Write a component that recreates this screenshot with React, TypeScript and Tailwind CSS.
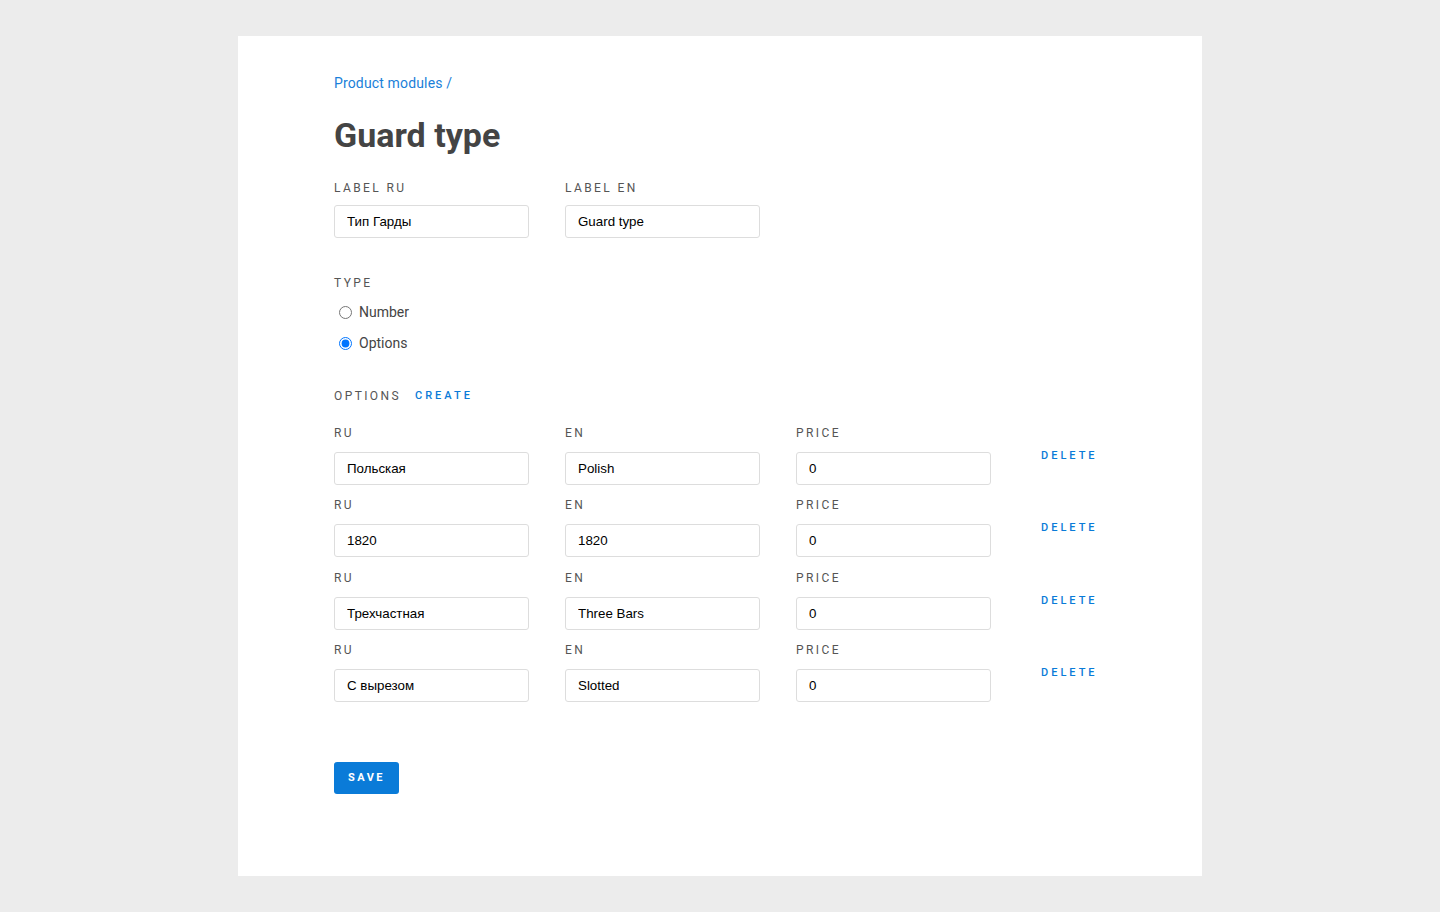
import React, { useState } from 'react';

type Option = { ru: string; en: string; price: string };

const initialOptions: Option[] = [
  { ru: 'Польская', en: 'Polish', price: '0' },
  { ru: '1820', en: '1820', price: '0' },
  { ru: 'Трехчастная', en: 'Three Bars', price: '0' },
  { ru: 'С вырезом', en: 'Slotted', price: '0' },
];

const labelCls = 'block text-[12px] leading-[14px] tracking-[2.4px] uppercase text-[#555]';
const inputCls =
  'w-[195px] h-[33px] border border-[#ddd] rounded-[3px] px-[12px] text-[13.33px] text-black outline-none bg-white font-["Liberation_Sans",Arial,sans-serif]';
const linkCls = 'text-[11px] leading-[14px] tracking-[3px] uppercase font-medium text-[#0a7bd8]';

export default function App() {
  const [labelRu, setLabelRu] = useState('Тип Гарды');
  const [labelEn, setLabelEn] = useState('Guard type');
  const [type, setType] = useState<'number' | 'options'>('options');
  const [options, setOptions] = useState<Option[]>(initialOptions);

  const update = (i: number, key: keyof Option, value: string) => {
    setOptions(prev => prev.map((o, idx) => (idx === i ? { ...o, [key]: value } : o)));
  };

  return (
    <div className="min-h-screen bg-[#ececec] pt-[36px] pb-[36px] font-[Roboto,'Noto_Sans',sans-serif]">
      <div className="w-[964px] h-[840px] mx-auto bg-white pl-[96px] pt-[37px]">
        <div className="text-[14px] leading-[20px] tracking-[0.15px] text-[#1a7fd9]">Product modules /</div>

        <h1 className="mt-[22px] text-[34px] leading-[40px] font-bold text-[#444]">Guard type</h1>

        <div className="mt-[26px] flex gap-[36px]">
          <div>
            <label className={labelCls}>Label ru</label>
            <input className={`${inputCls} mt-[10px]`} value={labelRu} onChange={e => setLabelRu(e.target.value)} />
          </div>
          <div>
            <label className={labelCls}>Label en</label>
            <input className={`${inputCls} mt-[10px]`} value={labelEn} onChange={e => setLabelEn(e.target.value)} />
          </div>
        </div>

        <div className="mt-[38px]">
          <label className={labelCls}>Type</label>
          <div className="mt-[12px] flex flex-col gap-[11px]">
            <label className="flex items-center h-[20px] text-[14px] text-[#444]">
              <input
                type="radio"
                name="type"
                className="ml-[5px] mr-[7px] w-[13px] h-[13px] accent-[#0075ff]"
                checked={type === 'number'}
                onChange={() => setType('number')}
              />
              Number
            </label>
            <label className="flex items-center h-[20px] text-[14px] text-[#444]">
              <input
                type="radio"
                name="type"
                className="ml-[5px] mr-[7px] w-[13px] h-[13px] accent-[#0075ff]"
                checked={type === 'options'}
                onChange={() => setType('options')}
              />
              Options
            </label>
          </div>
        </div>

        <div className="mt-[36px] flex items-center gap-[14px]">
          <span className={labelCls}>Options</span>
          <button
            className={linkCls}
            onClick={() => setOptions(prev => [...prev, { ru: '', en: '', price: '0' }])}
          >
            Create
          </button>
        </div>

        <div className="mt-[23px]">
          {options.map((o, i) => (
            <div key={i} className="flex gap-[36px] h-[72.33px]">
              <div>
                <label className={labelCls}>Ru</label>
                <input className={`${inputCls} mt-[12px]`} value={o.ru} onChange={e => update(i, 'ru', e.target.value)} />
              </div>
              <div>
                <label className={labelCls}>En</label>
                <input className={`${inputCls} mt-[12px]`} value={o.en} onChange={e => update(i, 'en', e.target.value)} />
              </div>
              <div>
                <label className={labelCls}>Price</label>
                <input className={`${inputCls} mt-[12px]`} value={o.price} onChange={e => update(i, 'price', e.target.value)} />
              </div>
              <div className="pl-[14px] pt-[16px]">
                <button
                  className={linkCls}
                  onClick={() => setOptions(prev => prev.filter((_, idx) => idx !== i))}
                >
                  Delete
                </button>
              </div>
            </div>
          ))}
        </div>

        <button className="mt-[47px] w-[65px] h-[32px] rounded-[3px] bg-[#0a7bd8] text-white text-[11px] font-bold tracking-[2.5px] uppercase">
          Save
        </button>
      </div>
    </div>
  );
}
